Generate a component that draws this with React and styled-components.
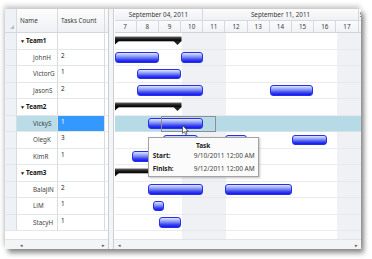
import React from 'react';
import styled, { createGlobalStyle } from 'styled-components';

const ROW_H = 16.5;
const DAY_W = 22.2;
const GX = 114; // page x where gantt panel begins
const DAY0 = 114.5; // page x where day 7 begins

const Global = createGlobalStyle`
  html, body { margin: 0; padding: 0; background: #fff; }
  body { font-family: "Noto Sans", "Open Sans", sans-serif; color: #333; }
`;

const Page = styled.div`
  width: 372px;
  height: 259px;
  padding: 9px 0 0 5px;
  box-sizing: border-box;
  overflow: hidden;
  background: #fff;
`;

const Frame = styled.div`
  width: 356px;
  height: 240px;
  display: flex;
  background: #fff;
  overflow: hidden;
  box-shadow: -1px -3px 5px rgba(0, 0, 0, 0.22), 3px 4px 5px rgba(0, 0, 0, 0.45);
`;

/* ---------- left grid ---------- */
const LeftPanel = styled.div`
  width: 103px;
  display: flex;
  flex-direction: column;
  flex-shrink: 0;
`;

const cols = '12px 41px 47px 1fr';

const GridHeader = styled.div`
  height: 24px;
  display: grid;
  grid-template-columns: ${cols};
  background: linear-gradient(#fdfdfd, #eef0f3);
  border-bottom: 1px solid #d4d8de;
  box-sizing: border-box;
`;

const HeaderCorner = styled.div`
  background: #eef1f5;
  border-right: 1px solid #d8dce2;
  display: flex;
  align-items: flex-end;
  justify-content: flex-end;
  padding: 0 2px 3px 0;
`;

const HeaderCell = styled.div`
  display: flex;
  align-items: center;
  padding-left: 3px;
  font-size: 6.3px;
  color: #3a3a3a;
  border-right: 1px solid #d8dce2;
  white-space: nowrap;
`;

const GridRow = styled.div`
  height: ${ROW_H}px;
  display: grid;
  grid-template-columns: ${cols};
`;

const RowHeaderCell = styled.div`
  background: #eef1f5;
  border-right: 1px solid #d8dce2;
  border-bottom: 1px solid #e3e6eb;
`;

const NameCell = styled.div`
  display: flex;
  align-items: center;
  padding-left: ${(p) => (p.$group ? '3px' : '16px')};
  font-size: 6.3px;
  font-weight: ${(p) => (p.$group ? 700 : 400)};
  color: ${(p) => (p.$group ? '#111' : '#444')};
  background: ${(p) => (p.$selected ? '#b9dce7' : '#fff')};
  border-right: 1px solid #d8dce2;
  border-bottom: 1px solid #e3e6eb;
  white-space: nowrap;
`;

const GroupArrow = styled.span`
  font-size: 5px;
  margin-right: 1px;
  color: #111;
`;

const CountCell = styled.div`
  padding: 1px 0 0 3px;
  font-size: 6.3px;
  color: ${(p) => (p.$selected ? '#fff' : '#222')};
  background: ${(p) => (p.$selected ? '#3399ff' : '#fff')};
  border-right: 1px solid #d8dce2;
  border-bottom: 1px solid #e3e6eb;
`;

const EmptyCell = styled.div`
  border-bottom: 1px solid #e3e6eb;
`;

const Filler = styled.div`
  flex: 1;
  background: #fff;
`;

const HScroll = styled.div`
  height: 10px;
  flex-shrink: 0;
  display: flex;
  align-items: center;
  justify-content: space-between;
  padding: 0 ${(p) => p.$right}px 0 ${(p) => p.$left}px;
  background: #f3f4f6;
  border-top: 1px solid #e2e4e8;
  box-sizing: border-box;
  font-size: 5px;
  color: #555;
`;

/* ---------- splitter ---------- */
const Splitter = styled.div`
  width: 6px;
  flex-shrink: 0;
  background: #f3f4f6;
  border-left: 1px solid #c9cdd4;
  border-right: 1px solid #c9cdd4;
  box-sizing: border-box;
`;

/* ---------- gantt ---------- */
const GanttPanel = styled.div`
  flex: 1;
  display: flex;
  flex-direction: column;
  overflow: hidden;
  min-width: 0;
`;

const Timeline = styled.div`
  flex: 1;
  display: flex;
  flex-direction: column;
  width: 246px;
  margin-left: ${DAY0 - GX}px;
  overflow: hidden;
`;

const WeekRow = styled.div`
  height: 12px;
  display: flex;
  background: linear-gradient(#fbfbfc, #f0f1f4);
  border-bottom: 1px solid #d6d9df;
  box-sizing: border-box;
  flex-shrink: 0;
`;

const WeekCell = styled.div`
  width: ${(p) => p.$days * DAY_W}px;
  flex-shrink: 0;
  display: flex;
  align-items: center;
  justify-content: ${(p) => (p.$start ? 'flex-start' : 'center')};
  padding-left: ${(p) => (p.$start ? '1px' : '0')};
  box-sizing: border-box;
  border-right: 1px solid #d6d9df;
  font-size: 6.3px;
  color: #3a3a3a;
  white-space: nowrap;
`;

const DayRow = styled.div`
  height: 12px;
  display: flex;
  background: linear-gradient(#fafbfc, #f1f2f5);
  border-bottom: 1px solid #cfd3da;
  box-sizing: border-box;
  flex-shrink: 0;
`;

const DayCell = styled.div`
  width: ${DAY_W}px;
  flex-shrink: 0;
  display: flex;
  align-items: center;
  justify-content: center;
  border-right: 1px solid #d6d9df;
  box-sizing: border-box;
  font-size: 6.3px;
  color: #3a3a3a;
`;

const GanttBody = styled.div`
  flex: 1;
  position: relative;
  background-image: linear-gradient(
    to right,
    transparent ${3 * DAY_W}px,
    #eff1f4 ${3 * DAY_W}px,
    #eff1f4 ${5 * DAY_W}px,
    transparent ${5 * DAY_W}px,
    transparent ${10 * DAY_W}px,
    #eff1f4 ${10 * DAY_W}px,
    #eff1f4 ${12 * DAY_W}px,
    transparent ${12 * DAY_W}px
  );
`;

const GanttRow = styled.div`
  height: ${ROW_H}px;
  position: relative;
  background: ${(p) => (p.$selected ? '#b7dbe6' : 'transparent')};
  border-bottom: 1px solid rgba(225, 228, 234, 0.7);
  box-sizing: border-box;
`;

const TaskBar = styled.div`
  position: absolute;
  top: 2.5px;
  height: 10.5px;
  box-sizing: border-box;
  border-radius: 3px;
  border: 1px solid #2730e8;
  background: linear-gradient(
    #dfe4ff 0%,
    #aab5fa 25%,
    #7282f2 50%,
    #3c49ef 72%,
    #1414f4 100%
  );
`;

const Summary = styled.svg`
  position: absolute;
  top: 0;
  overflow: visible;
`;

const DragBox = styled.div`
  position: absolute;
  top: 0.5px;
  height: 15.5px;
  border: 1px solid #8e8e8e;
  box-sizing: border-box;
`;

const Cursor = styled.svg`
  position: absolute;
  overflow: visible;
`;

const Tooltip = styled.div`
  position: absolute;
  left: ${147.7 - DAY0}px;
  top: 104px;
  width: 111px;
  height: 40px;
  box-sizing: border-box;
  background: #fbfbfb;
  border: 1px solid #a3a3a3;
  box-shadow: 1px 1px 2px rgba(0, 0, 0, 0.25);
  padding: 3px 0 0 4px;
  display: grid;
  grid-template-columns: 41px 1fr;
  grid-template-rows: 8px 13px 13px;
  align-items: center;
  font-size: 6.5px;
  color: #333;
  z-index: 3;
`;

const TipTitle = styled.div`
  grid-column: 1 / 3;
  text-align: center;
  font-weight: 700;
  color: #222;
  padding-right: 4px;
`;

const TipLabel = styled.div`
  font-weight: 700;
  color: #222;
`;

const TipValue = styled.div`
  color: #444;
  white-space: nowrap;
`;

const rows = [
  { group: 'Team1' },
  { name: 'JohnH', count: 2, bars: [[115, 158.5], [181.3, 202.8]] },
  { name: 'VictorG', count: 1, bars: [[136.7, 180.7]] },
  { name: 'JasonS', count: 2, bars: [[136.7, 202.8], [270, 313.3]] },
  { group: 'Team2' },
  { name: 'VickyS', count: 1, selected: true, bars: [[148.3, 203.3]], drag: [161, 215.7] },
  { name: 'OlegK', count: 3, bars: [[163, 198], [225, 247], [291.7, 327.3]] },
  { name: 'KimR', count: 1, bars: [[132.3, 170]] },
  { group: 'Team3' },
  { name: 'BalajiN', count: 2, bars: [[148.3, 202.8], [225, 291.7]] },
  { name: 'LiM', count: 1, bars: [[153.3, 164.3]] },
  { name: 'StacyH', count: 1, bars: [[159, 181]] },
];

const px = (x) => x - DAY0;

function SummaryBar() {
  // spans page x 114..181.5
  const x0 = px(112);
  const w = 181.5 - 112;
  return (
    <Summary style={{ left: x0 }} width={w} height={13} viewBox={`0 0 ${w} 13`}>
      <defs>
        <linearGradient id="sg" x1="0" y1="0" x2="0" y2="1">
          <stop offset="0" stopColor="#6a6a6a" />
          <stop offset="0.5" stopColor="#1e1e1e" />
          <stop offset="1" stopColor="#000" />
        </linearGradient>
      </defs>
      <rect x="0" y="3.5" width={w} height="4.8" fill="url(#sg)" />
      <polygon points="1,8 7,8 3,11.5" fill="#111" />
      <polygon points={`${w - 8},8 ${w},8 ${w - 4},12`} fill="#222" />
    </Summary>
  );
}

export default function App() {
  const days = [7, 8, 9, 10, 11, 12, 13, 14, 15, 16, 17];
  return (
    <Page>
      <Global />
      <Frame>
        <LeftPanel>
          <GridHeader>
            <HeaderCorner>
              <svg width="4" height="4" viewBox="0 0 4 4">
                <polygon points="4,0 4,4 0,4" fill="#b8bcc4" />
              </svg>
            </HeaderCorner>
            <HeaderCell>Name</HeaderCell>
            <HeaderCell>Tasks Count</HeaderCell>
            <div />
          </GridHeader>
          {rows.map((r, i) =>
            r.group ? (
              <GridRow key={i}>
                <RowHeaderCell />
                <NameCell $group>
                  <GroupArrow>▼</GroupArrow>
                  {r.group}
                </NameCell>
                <CountCell />
                <EmptyCell />
              </GridRow>
            ) : (
              <GridRow key={i}>
                <RowHeaderCell />
                <NameCell $selected={r.selected}>{r.name}</NameCell>
                <CountCell $selected={r.selected}>{r.count}</CountCell>
                <EmptyCell />
              </GridRow>
            )
          )}
          <Filler />
          <HScroll $left={15} $right={3}>
            <span>◂</span>
            <span>▸</span>
          </HScroll>
        </LeftPanel>
        <Splitter />
        <GanttPanel>
          <Timeline>
            <WeekRow>
              <WeekCell $days={4}>September 04, 2011</WeekCell>
              <WeekCell $days={7}>September 11, 2011</WeekCell>
              <WeekCell $days={0.2} $start>S</WeekCell>
            </WeekRow>
            <DayRow>
              {days.map((d) => (
                <DayCell key={d}>{d}</DayCell>
              ))}
            </DayRow>
            <GanttBody>
              {rows.map((r, i) => (
                <GanttRow key={i} $selected={r.selected}>
                  {r.group && <SummaryBar />}
                  {(r.bars || []).map(([a, b], j) => (
                    <TaskBar key={j} style={{ left: px(a), width: b - a }} />
                  ))}
                  {r.drag && (
                    <>
                      <DragBox style={{ left: px(r.drag[0]), width: r.drag[1] - r.drag[0] }} />
                      <Cursor style={{ left: px(181.5), top: 9.5 }} width="7" height="10" viewBox="0 0 7 10">
                        <path d="M0.5 0.5 L0.5 8.3 L2.4 6.6 L3.7 9.5 L5 8.9 L3.8 6.1 L6.3 6.1 Z" fill="#fff" stroke="#333" strokeWidth="0.7" strokeLinejoin="round" />
                      </Cursor>
                    </>
                  )}
                </GanttRow>
              ))}
              <Tooltip>
                <TipTitle>Task</TipTitle>
                <TipLabel>Start:</TipLabel>
                <TipValue>9/10/2011 12:00 AM</TipValue>
                <TipLabel>Finish:</TipLabel>
                <TipValue>9/12/2011 12:00 AM</TipValue>
              </Tooltip>
            </GanttBody>
          </Timeline>
          <HScroll $left={4} $right={3}>
            <span>◂</span>
            <span>▸</span>
          </HScroll>
        </GanttPanel>
      </Frame>
    </Page>
  );
}
